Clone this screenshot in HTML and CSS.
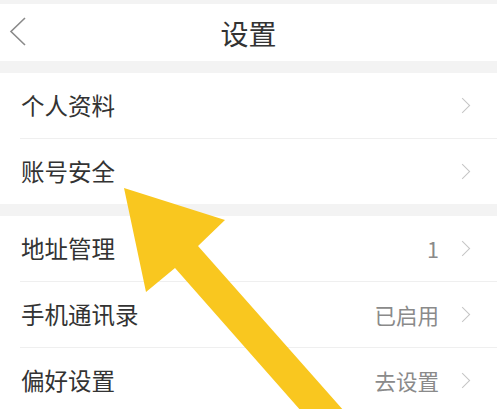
FILE: index.html
```html
<!doctype html>
<html lang="zh-CN">
<head>
    <meta charset="UTF-8">
    <meta name="viewport" content="width=device-width, initial-scale=1.0">
    <title>设置</title>
    <link rel="stylesheet" href="styles.css">
</head>
<body>
    <div class="page">
        <div class="header">
            <svg class="back" width="18" height="30" viewBox="0 0 18 30">
                <polyline points="16,1 2,14.5 16,28" fill="none" stroke="#8a8a8a" stroke-width="1.6"/>
            </svg>
            <h1 class="title">设置</h1>
        </div>

        <div class="group">
            <div class="item">
                <div class="label">个人资料</div>
                <div class="right"><span class="chev"></span></div>
            </div>
            <div class="item">
                <div class="label">账号安全</div>
                <div class="right"><span class="chev"></span></div>
            </div>
        </div>

        <div class="group">
            <div class="item">
                <div class="label">地址管理</div>
                <div class="right"><span class="value">1</span><span class="chev"></span></div>
            </div>
            <div class="item">
                <div class="label">手机通讯录</div>
                <div class="right"><span class="value">已启用</span><span class="chev"></span></div>
            </div>
            <div class="item">
                <div class="label">偏好设置</div>
                <div class="right"><span class="value">去设置</span><span class="chev"></span></div>
            </div>
        </div>

        <!-- yellow pointer drawn over the list -->
        <svg class="arrow" width="497" height="409" viewBox="0 0 497 409">
            <polygon points="124,188 225,220 198,246 352,420 309,420 175,268 146,292" fill="#f9c71f"/>
        </svg>
    </div>
</body>
</html>
```

FILE: styles.css
```css
body {
    margin: 0;
    background: #f3f3f3;
    font-family: "Noto Sans CJK SC", "Noto Sans", sans-serif;
    color: #333;
}
.page {
    position: relative;
    height: 409px;
    overflow: hidden;
    padding-top: 4px;
    box-sizing: border-box;
}
.header {
    position: relative;
    height: 57px;
    background: #fff;
    display: flex;
    align-items: center;
    justify-content: center;
}
.back {
    position: absolute;
    left: 9px;
    top: 13px;
}
.title {
    margin: 0;
    font-size: 28px;
    font-weight: normal;
    line-height: 1;
    color: #333;
}
.group {
    background: #fff;
    margin-top: 12px;
}
.item {
    height: 65px;
    display: flex;
    align-items: center;
    justify-content: space-between;
    padding: 0 27px 0 1px;
    margin-left: 20px;
}
.item + .item {
    border-top: 1px solid #efefef;
}
.label {
    font-size: 23.5px;
    line-height: 1;
}
.right {
    display: flex;
    align-items: center;
}
.value {
    font-size: 21.5px;
    color: #8a8a8a;
    line-height: 1;
    margin-right: 18px;
}
.chev {
    width: 10px;
    height: 10px;
    border-top: 1.6px solid #c4c4c4;
    border-right: 1.6px solid #c4c4c4;
    transform: rotate(45deg);
    margin-right: 2px;
}
.arrow {
    position: absolute;
    left: 0;
    top: 0;
}
```
